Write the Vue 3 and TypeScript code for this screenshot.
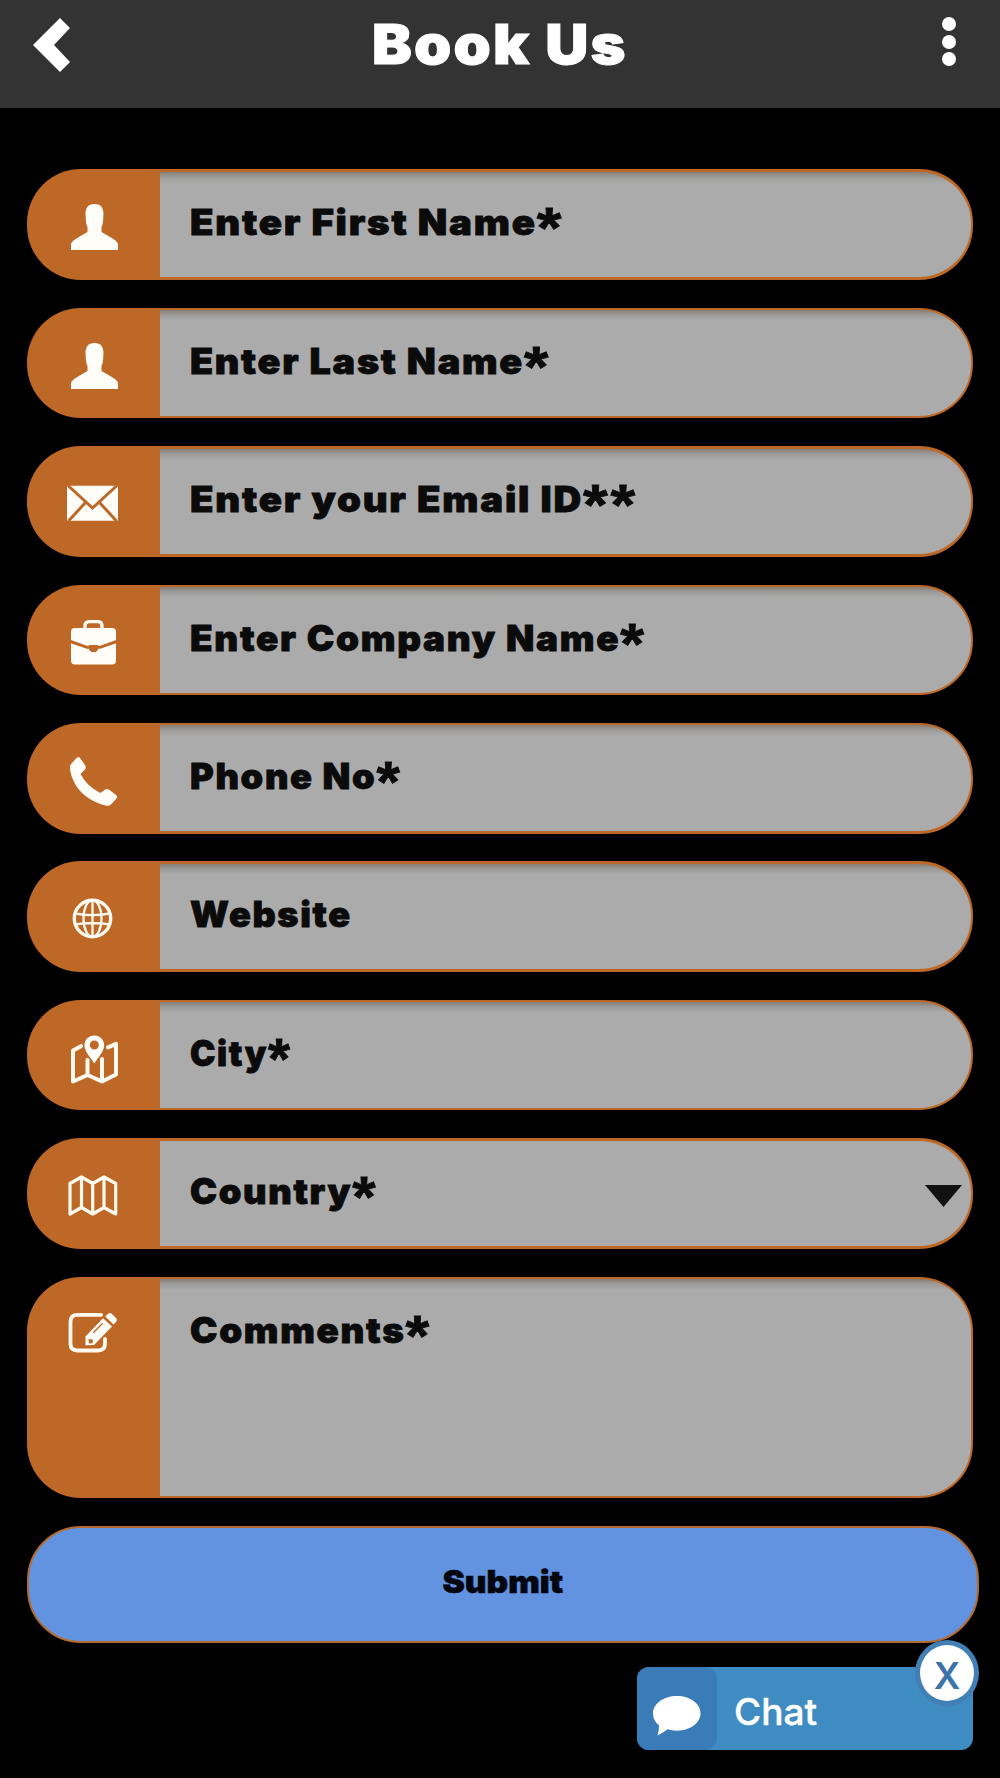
<script setup lang="ts">
interface Field {
  id: string
  label: string
  stretch: number
  stars?: string
  kind?: 'select' | 'area'
}

const fields: Field[] = [
  { id: 'first', label: 'Enter First Name', stars: '*', stretch: 1.096 },
  { id: 'last', label: 'Enter Last Name', stars: '*', stretch: 1.079 },
  { id: 'email', label: 'Enter your Email ID', stars: '**', stretch: 1.096 },
  { id: 'company', label: 'Enter Company Name', stars: '*', stretch: 1.054 },
  { id: 'phone', label: 'Phone No', stars: '*', stretch: 1.035 },
  { id: 'website', label: 'Website', stretch: 1.03 },
  { id: 'city', label: 'City', stars: '*', stretch: 0.975 },
  { id: 'country', label: 'Country', stars: '*', stretch: 1.035, kind: 'select' },
  { id: 'comments', label: 'Comments', stars: '*', stretch: 1.05, kind: 'area' },
]
</script>

<template>
  <div class="page">
    <header class="bar">
      <svg class="back" viewBox="0 0 37 54"><path d="M27 0 37 10 21 27 37 44 27 54 0 27Z" fill="#fff" /></svg>
      <h1 class="title">Book Us</h1>
      <span class="menu"><i></i><i></i><i></i></span>
    </header>

    <form class="form" @submit.prevent>
      <label v-for="f in fields" :key="f.id" class="row" :class="f.kind">
        <span class="badge">
          <svg class="icon" viewBox="0 0 133 110">
            <path v-if="f.id === 'first' || f.id === 'last'" class="solid" d="M67.500 35C74 35 76.500 39 76.500 45L76 53Q75.500 56.500 74.500 58V63C80 66.500 84 68 88.500 71.500Q91 73.500 91 76V81H44V76Q44 73.500 46.500 71.500C51 68 55 66.500 60.500 63V58Q59.500 56.500 59 53L58.500 45C58.500 39 61 35 67.500 35Z" />
            <g v-else-if="f.id === 'email'">
              <rect class="solid" x="40" y="39.700" width="51" height="35" rx="1" />
              <path class="cut" d="M41 39.500 65.500 62 90 39.500M41.500 75 58.500 56.500M89.500 75 72.500 56.500" />
            </g>
            <g v-else-if="f.id === 'company'">
              <path class="line" stroke-width="3.400" d="M58 42.500V41Q58 36.600 62 36.600H71Q75 36.600 75 41V42.500" />
              <rect class="solid" x="44" y="43" width="45" height="36.500" rx="4" />
              <path class="cut" d="M43.500 56.500 60 62.300H73L89.500 56.500" />
              <path d="M62 60H71V64.500L69 67H64L62 64.500Z" fill="#bd6827" />
            </g>
            <path v-else-if="f.id === 'phone'" class="solid" d="M49.500 35Q51.300 33 53 35L58 42Q59.500 44.500 58 46.500L53.500 51Q60 63.500 73.500 70L77.500 67Q80 65 82.500 67L89 72Q91 73.500 89.500 75.500L84 81.500Q82 83.500 78.500 82.500C59 77.500 45.500 64 43 46Q42.500 42.500 44.500 40.500Z" />
            <g v-else-if="f.id === 'website'" class="line" stroke-width="2.300">
              <circle cx="65.500" cy="57.500" r="18.200" stroke-width="3.400" />
              <ellipse cx="65.500" cy="57.500" rx="9" ry="18.300" />
              <path d="M65.500 39V76M48 52.300Q65.500 56 83 52.300M48 63.500Q65.500 60.500 83 63.500" />
            </g>
            <g v-else-if="f.id === 'city'">
              <path class="line" stroke-width="4" d="M54 46.200 46 50.500V81.500L60.500 75 75 81.500 89 74.500V43.800L81 47.300M60.500 60V75M75 59V81" />
              <path class="solid" fill-rule="evenodd" d="M67.300 35.500C73 35.500 77.200 39.800 77.200 45.300C77.200 51.500 71 57.500 67.300 63.500C63.600 57.500 57.400 51.500 57.400 45.300C57.400 39.800 61.600 35.500 67.300 35.500ZM67.300 40.500A4.500 4.500 0 1 0 67.300 49.500A4.500 4.500 0 1 0 67.300 40.500Z" />
            </g>
            <path v-else-if="f.id === 'country'" class="line" stroke-width="3.200" d="M43 45.500 54.500 39 65.700 45.500 77 39 88.700 45.500V76L77 69.500 65.700 76 54.500 69.500 43 76ZM54.500 39V69.500M65.700 45.500V76M77 39V69.500" />
            <g v-else>
              <path class="line" stroke-width="3.800" d="M74 37.800H50.500Q43.500 37.800 43.500 44.800V66.800Q43.500 73.500 50.500 73.500H71Q78 73.500 78 66.800V62" />
              <path class="solid" d="M58.500 59.600 76 41.300 85 49.500 67 68 58.500 68.300Z" />
              <path class="solid" d="M78.300 39.500 81.300 36.500Q83 35.300 84.700 36.800L89.200 41.300Q90.700 43 89.200 44.800L86.500 47.600Z" />
              <path d="M66.300 55.800 75.500 46.300" stroke="#bd6827" stroke-width="1.300" />
              <path d="M61.500 62 66 62.800 65.500 66.300 62 66.500Z" fill="#bd6827" />
            </g>
          </svg>
        </span>
        <span class="field">
          <span class="label" :style="{ transform: `scaleX(${f.stretch})` }">{{ f.label }}<span v-if="f.stars" class="stars">{{ f.stars }}</span></span>
          <svg v-if="f.kind === 'select'" class="caret" viewBox="0 0 37 22"><path d="M0 0H37L18.500 22Z" fill="#111" /></svg>
        </span>
      </label>
      <button class="submit"><span>Submit</span></button>
    </form>

    <div class="chat">
      <span class="bubble">
        <svg viewBox="0 0 48 40"><path d="M24 0C37 0 47.500 7.500 47.500 17.300S37 34.700 24 34.700Q19 34.700 14.500 33.300Q11 36.500 4.500 39.500Q6 35 6 29.500Q0 24.500 0 17.300C0 7.500 11 0 24 0Z" fill="#fff" /></svg>
      </span>
      <span class="chat-label">Chat</span>
      <span class="close">X</span>
    </div>
  </div>
</template>

<style>
body {
  background: #000;
}
</style>

<style scoped>
.page {
  box-sizing: border-box;
  width: 1000px;
  height: 1778px;
  overflow: hidden;
  background: #000;
  font-family: Inter, "Liberation Sans", sans-serif;
}
.bar {
  box-sizing: border-box;
  height: 108px;
  padding: 18px 44px 0 33px;
  display: flex;
  justify-content: space-between;
  align-items: flex-start;
  background: #333;
}
.back {
  width: 37px;
  height: 54px;
}
.title {
  margin: 0;
  font-size: 55px;
  line-height: 53px;
  font-weight: 900;
  letter-spacing: 2px;
  color: #fff;
  -webkit-text-stroke: 1px #fff;
  transform: scaleX(1.085);
}
.menu {
  display: flex;
  flex-direction: column;
  align-items: flex-end;
  width: 26px;
  gap: 3.500px;
  margin-top: -1px;
}
.menu i {
  width: 14px;
  height: 14px;
  border-radius: 50%;
  background: #fff;
}
.form {
  display: flex;
  flex-direction: column;
  gap: 27.800px;
  padding: 61.400px 21px 0 27px;
}
.row {
  box-sizing: border-box;
  display: flex;
  width: 946px;
  height: 110.600px;
  border-radius: 54px;
  overflow: hidden;
  background: #bd6827;
}
.area {
  height: 221.600px;
}
.badge {
  width: 133px;
  flex: none;
}
.icon {
  display: block;
  width: 133px;
  height: 110px;
}
.solid {
  fill: #fffdf8;
}
.line {
  fill: none;
  stroke: #fffaf0;
  stroke-linejoin: round;
  stroke-linecap: round;
}
.cut {
  fill: none;
  stroke: #bd6827;
  stroke-width: 3;
}
.field {
  flex: 1;
  display: flex;
  justify-content: space-between;
  align-items: flex-start;
  box-sizing: border-box;
  margin: 2.500px 2px 2.500px 0;
  padding: 30.500px 9px 0 29.500px;
  border-radius: 0 52px 52px 0;
  background: linear-gradient(#867f79, #9c9b99 5px, #ababab 11px);
}
.select .field {
  background: #ababab;
}
.label {
  font-size: 35px;
  line-height: 40px;
  font-weight: 900;
  letter-spacing: 1.600px;
  color: #0b0b0b;
  white-space: nowrap;
  transform-origin: 0 50%;
  -webkit-text-stroke: 0.800px #0b0b0b;
}
.stars {
  font-family: "Liberation Sans", Arial, sans-serif;
  font-size: 58px;
  font-weight: 700;
  line-height: 0;
  letter-spacing: 2.500px;
  vertical-align: -13px;
}
.caret {
  width: 37px;
  height: 22px;
  margin-top: 13.500px;
}
.submit {
  box-sizing: border-box;
  width: 952px;
  height: 117px;
  padding: 0 0 6px;
  border: 2px solid #b46b30;
  border-radius: 54px;
  background: #6193e1;
  font-family: inherit;
  font-size: 31px;
  font-weight: 900;
  color: #03050f;
}
.submit span {
  display: inline-block;
  transform: scaleX(1.08);
  -webkit-text-stroke: 0.600px #03050f;
}
.chat {
  position: relative;
  display: flex;
  align-items: center;
  width: 336px;
  height: 83px;
  margin: 24.500px 0 0 637px;
  border-radius: 12px;
  background: #3f8cc3;
}
.bubble {
  box-sizing: border-box;
  width: 80px;
  height: 83px;
  padding: 29px 0 0 16px;
  border-radius: 12px;
  background: #3a7cb8;
}
.bubble svg {
  display: block;
  width: 48px;
  height: 40px;
}
.chat-label {
  margin: 6px 0 0 17px;
  font-size: 37px;
  font-weight: 500;
  color: #fff;
  -webkit-text-stroke: 0.400px #fff;
}
.close {
  position: absolute;
  top: -27.500px;
  right: -6px;
  box-sizing: border-box;
  width: 64px;
  height: 66px;
  padding-top: 3px;
  border: 5px solid #417fb5;
  border-radius: 50%;
  background: #fff;
  color: #3a74a8;
  font-size: 37px;
  line-height: 56px;
  font-weight: 600;
  text-align: center;
}
</style>
